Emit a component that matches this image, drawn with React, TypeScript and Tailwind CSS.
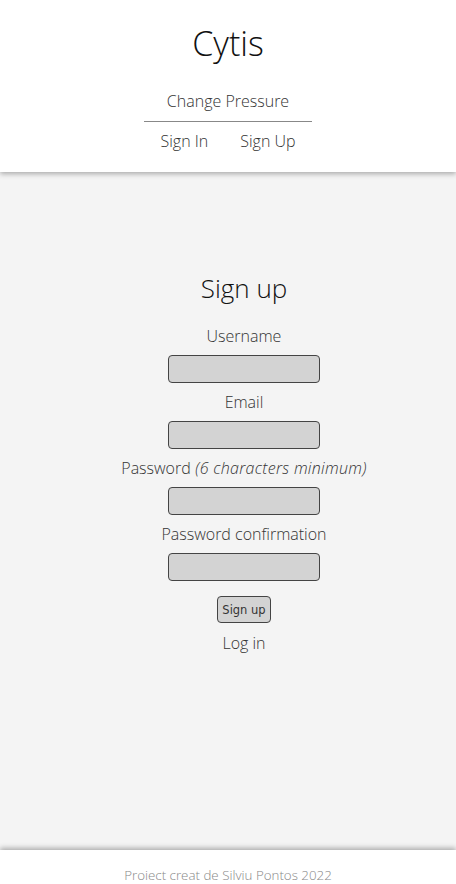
import React from "react";

const font = { fontFamily: '"Open Sans", "Liberation Sans", sans-serif' };

function Field({ label, italic }: { label: string; italic?: string }) {
  return (
    <div className="flex flex-col items-center">
      <label className="text-[16px] leading-[22px] font-light text-[#333]">
        {label}
        {italic && <em className="italic tracking-[0.3px]"> {italic}</em>}
      </label>
      <input
        className="mt-[8px] mb-[8px] h-[28px] w-[152px] rounded-[4px] border border-[#444] bg-[#d3d3d3] outline-none"
        type="text"
      />
    </div>
  );
}

export default function App() {
  return (
    <div className="min-h-screen bg-[#f4f4f4] flex flex-col" style={font}>
      <header className="relative z-10 bg-white shadow-[0_2px_5px_rgba(0,0,0,0.3)] h-[172px] flex flex-col items-center">
        <h1 className="mt-[22px] text-[34px] leading-[42px] font-light text-[#111]">Cytis</h1>
        <div className="mt-[26px] w-[168px] border-b border-[#888] pb-[9px] text-center text-[16px] leading-[22px] font-light text-[#333]">
          Change Pressure
        </div>
        <nav className="mt-[8px] flex gap-[32px] text-[16px] leading-[22px] font-light text-[#333]">
          <span>Sign In</span>
          <span>Sign Up</span>
        </nav>
      </header>
      <main className="h-[678px] flex flex-col items-center pt-[98px] pl-[32px]">
        <h2 className="text-[26px] leading-[36px] font-light text-[#111]">Sign up</h2>
        <div className="mt-[19px] flex flex-col items-center">
          <Field label="Username" />
          <Field label="Email" />
          <Field label="Password" italic="(6 characters minimum)" />
          <Field label="Password confirmation" />
        </div>
        <button
          className="mt-[7px] h-[27px] w-[54px] rounded-[4px] border border-[#444] bg-[#d3d3d3] pt-[1px] text-[11.5px] leading-[14px] font-normal text-[#333]"
          style={{ fontFamily: '"DejaVu Sans", sans-serif' }}
        >
          Sign up
        </button>
        <div className="mt-[9px] text-[16px] leading-[22px] font-light text-[#333]">Log in</div>
      </main>
      <footer className="relative bg-white shadow-[0_-2px_5px_rgba(0,0,0,0.3)] h-[60px] flex justify-center pt-[16px]">
        <span className="text-[13.33px] leading-[18px] font-light text-[#888]">Proiect creat de Silviu Pontos 2022</span>
      </footer>
    </div>
  );
}
